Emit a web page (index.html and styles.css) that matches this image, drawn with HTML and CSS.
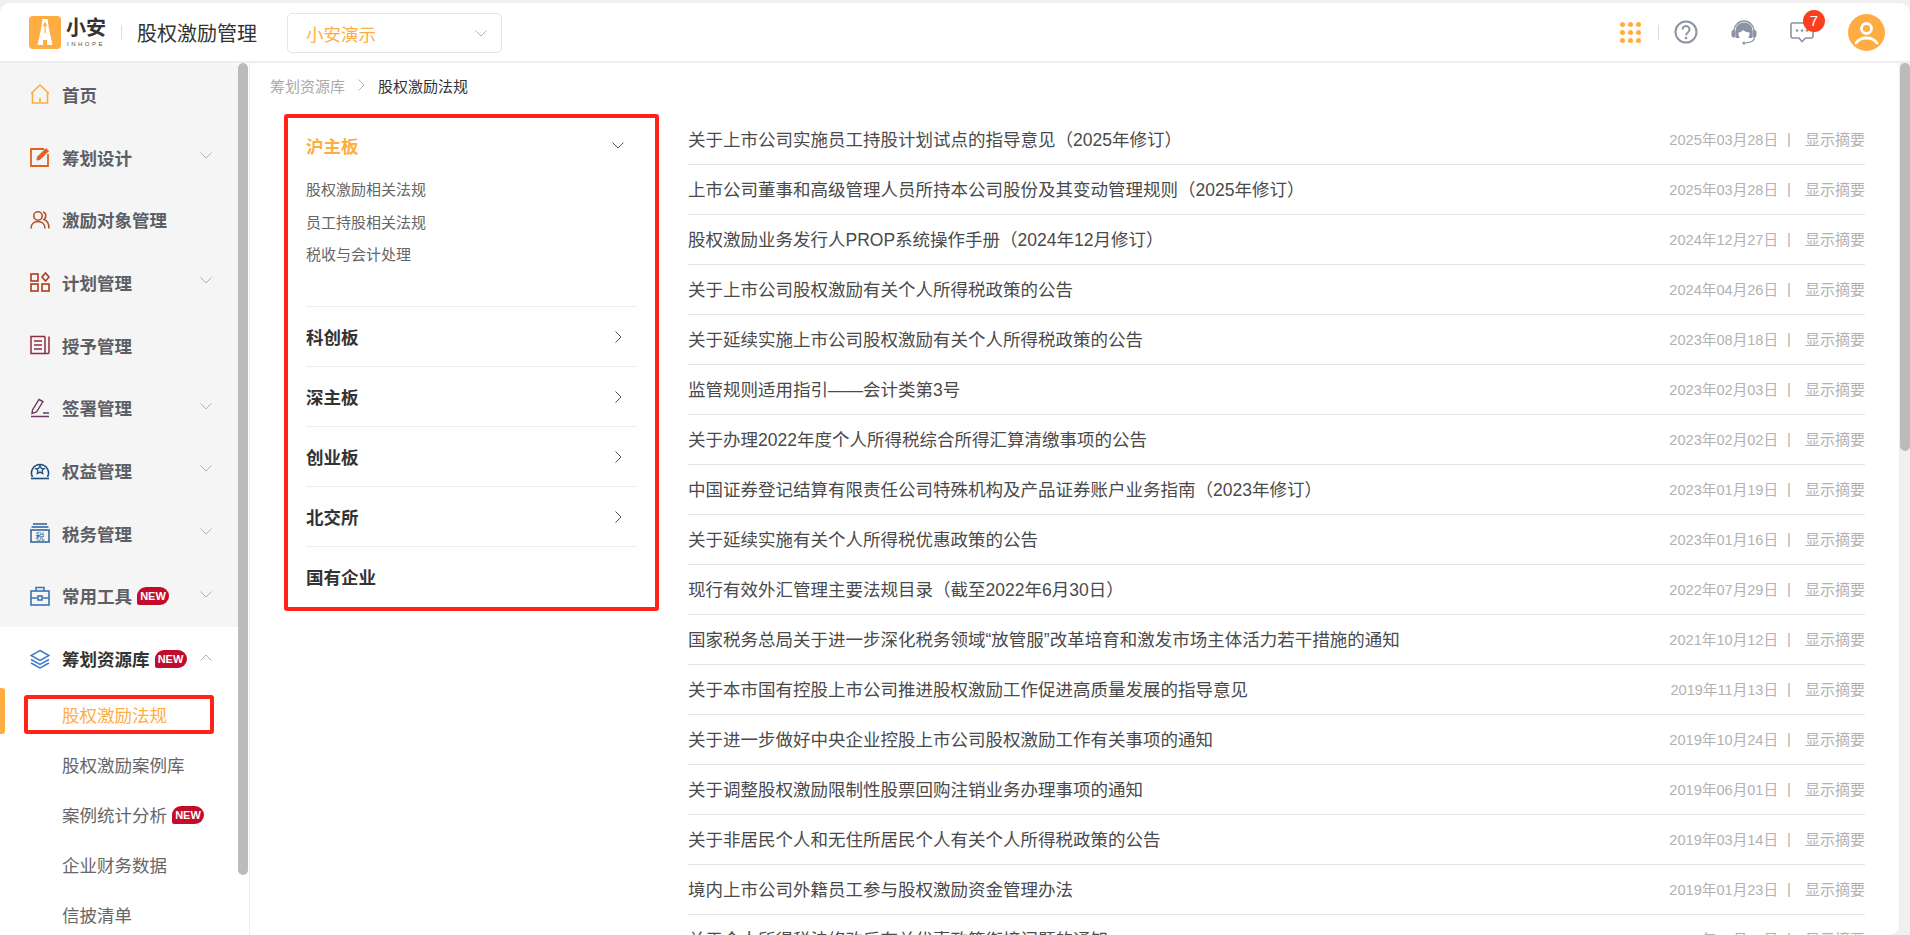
FILE: index.html
```html
<!DOCTYPE html>
<html lang="zh-CN">
<head>
    <meta charset="UTF-8">
    <title>股权激励法规</title>
    <link rel="stylesheet" href="styles.css">
</head>
<body>
    <header class="topbar">
        <div class="logo">
            <svg class="logo-mark" viewBox="0 0 32 33">
                <rect width="32" height="33" rx="4" fill="#ffad42"/>
                <path d="M13.500 3h5l1.500 10 3.500 16H18v-5h-4v5H8.500l3.500-16z" fill="#fff"/>
                <path d="M16 7v10M14.300 10 16 7l1.700 3" stroke="#ffad42" stroke-width="1.200" fill="none"/>
            </svg>
            <div class="logo-text">
                <span class="logo-cn">小安</span>
                <span class="logo-en">INHOPE</span>
            </div>
        </div>
        <span class="logo-line"></span>
        <span class="app-title">股权激励管理</span>
        <div class="company-select">
            <span>小安演示</span>
            <svg class="chev" viewBox="0 0 12 7"><path d="M.5.500 6 6 11.500.500"/></svg>
        </div>
        <div class="tools">
            <div class="dots"><i></i><i></i><i></i><i></i><i></i><i></i><i></i><i></i><i></i></div>
            <span class="tools-line"></span>
            <svg class="tool-icon help" viewBox="0 0 24 24">
                <circle cx="12" cy="12" r="10.500" fill="none" stroke="#8d93a3" stroke-width="2"/>
                <path d="M8.500 9.500a3.500 3.500 0 1 1 5.600 2.800c-1.300 1-2.100 1.600-2.100 3" fill="none" stroke="#8d93a3" stroke-width="2"/>
                <circle cx="12" cy="18" r="1.300" fill="#8d93a3"/>
            </svg>
            <svg class="tool-icon headset" viewBox="0 0 26 26">
                <path d="M3 12a10 10 0 0 1 20 0" fill="none" stroke="#8d93a3" stroke-width="1.300"/>
                <path d="M13 3.500c-5 0-8.500 3.500-8.500 8.500v7h17v-7c0-5-3.500-8.500-8.500-8.500z" fill="#8d93a3"/>
                <path d="M7.500 13.500c2-.2 3.500-1 4.500-2.500 1.500 1.500 4 2.300 6.500 2.500.3 4-2 8-5.500 8s-5.800-4-5.500-8z" fill="#fff"/>
                <rect x=".5" y="11" width="4" height="7.500" rx="2" fill="#8d93a3"/>
                <rect x="21.500" y="11" width="4" height="7.500" rx="2" fill="#8d93a3"/>
                <path d="M23.500 18c0 3.500-3.500 5.500-8.500 5.800" fill="none" stroke="#8d93a3" stroke-width="1.200"/>
                <circle cx="13" cy="24" r="1.600" fill="#8d93a3"/>
            </svg>
            <div class="msg">
                <svg class="tool-icon" viewBox="0 0 24 22">
                    <path d="M1 3.500a1.500 1.500 0 0 1 1.500-1.500h19a1.500 1.500 0 0 1 1.500 1.500v12a1.500 1.500 0 0 1-1.500 1.500h-6l-3.500 3.500L9 17H2.500A1.500 1.500 0 0 1 1 15.500z" fill="none" stroke="#8d93a3" stroke-width="1.600"/>
                    <circle cx="7" cy="9.500" r="1.300" fill="#8d93a3"/>
                    <circle cx="12" cy="9.500" r="1.300" fill="#8d93a3"/>
                    <circle cx="17" cy="9.500" r="1.300" fill="#8d93a3"/>
                </svg>
                <span class="msg-count">7</span>
            </div>
            <svg class="avatar" viewBox="0 0 37 37">
                <circle cx="18.500" cy="18.500" r="18.500" fill="#ffad42"/>
                <circle cx="18.500" cy="14.500" r="5" fill="none" stroke="#fff" stroke-width="2.800"/>
                <path d="M8 29c2.500-3.500 6.500-5 10.500-5s8 1.500 10.500 5" fill="none" stroke="#fff" stroke-width="2.800" stroke-linecap="round"/>
            </svg>
        </div>
    </header>

    <div class="layout">
        <aside class="sidebar">
            <div class="nav-item">
                <svg class="nav-icon" viewBox="0 0 20 20" stroke="#ffad42" stroke-width="1.600" stroke-linejoin="round"><path d="M1 9.500 10 1l9 8.500M2.500 8v11h15V8M10 14v5"/></svg>
                <span>首页</span>
            </div>
            <div class="nav-item">
                <svg class="nav-icon" viewBox="0 0 20 20" stroke="#e2611f"><path d="M14 2H1v17h17V7" stroke-width="1.800"/><path d="M7 13l.5-3L16 1.500 18.500 4 10 12.500z" fill="#e2611f"/></svg>
                <span>筹划设计</span>
                <svg class="chev" viewBox="0 0 12 7"><path d="M.5.500 6 6 11.500.500"/></svg>
            </div>
            <div class="nav-item">
                <svg class="nav-icon" viewBox="0 0 20 20" stroke="#b4502c"><circle cx="8" cy="6" r="4.200" stroke-width="1.600"/><path d="M1 18.500c0-4.500 3-7 7-7s7 2.500 7 7M13 2c3 .5 4 5 1 7.500 3 1 5 4 5 9" stroke-width="1.600"/></svg>
                <span>激励对象管理</span>
            </div>
            <div class="nav-item">
                <svg class="nav-icon" viewBox="0 0 20 20" stroke="#b23a1c" stroke-width="1.600"><rect x="1" y="2" width="7" height="7"/><rect x="1" y="12" width="7" height="7"/><rect x="12" y="12" width="7" height="7"/><path d="M15.500 1l3.500 4-3.500 4L12 5z"/></svg>
                <span>计划管理</span>
                <svg class="chev" viewBox="0 0 12 7"><path d="M.5.500 6 6 11.500.500"/></svg>
            </div>
            <div class="nav-item">
                <svg class="nav-icon" viewBox="0 0 20 20" stroke="#8f2d3f" stroke-width="1.500"><path d="M15 1.500H1v17h17c1 0 1-1 1-1.500V1.500M15 1.500v17M4 6h8M4 10h8M4 14h8"/></svg>
                <span>授予管理</span>
            </div>
            <div class="nav-item">
                <svg class="nav-icon" viewBox="0 0 20 20" stroke="#6a3b5e" stroke-width="1.400"><path d="M2 15.500 2.500 12 9 1.500l4 2L6.500 14zM1 18.500h18M13 15h6"/></svg>
                <span>签署管理</span>
                <svg class="chev" viewBox="0 0 12 7"><path d="M.5.500 6 6 11.500.500"/></svg>
            </div>
            <div class="nav-item">
                <svg class="nav-icon" viewBox="0 0 20 20" stroke="#1f4f7c" stroke-width="1.600"><path d="M2.500 17a8.500 8.500 0 1 1 15 0"/><path d="M1 18.500h18"/><path d="M10 5.500l1.300 2.800 3 .3-2.200 2 .6 3L10 12.100l-2.700 1.500.6-3-2.200-2 3-.3z" stroke-width="1.300"/></svg>
                <span>权益管理</span>
                <svg class="chev" viewBox="0 0 12 7"><path d="M.5.500 6 6 11.500.500"/></svg>
            </div>
            <div class="nav-item">
                <svg class="nav-icon" viewBox="0 0 20 20" stroke="#2c5f95" stroke-width="1.500"><path d="M3 1h14M1.500 4h17"/><rect x="1" y="7" width="18" height="12"/><text x="10" y="16.500" class="tax-mark">税</text></svg>
                <span>税务管理</span>
                <svg class="chev" viewBox="0 0 12 7"><path d="M.5.500 6 6 11.500.500"/></svg>
            </div>
            <div class="nav-item">
                <svg class="nav-icon" viewBox="0 0 20 20" stroke="#3a74b5" stroke-width="1.600"><rect x="1" y="5" width="18" height="14"/><path d="M6 5V1.500h8V5M1 12h6M13 12h6"/><rect x="8" y="10" width="4" height="4"/></svg>
                <span>常用工具</span>
                <em class="new-tag">NEW</em>
                <svg class="chev" viewBox="0 0 12 7"><path d="M.5.500 6 6 11.500.500"/></svg>
            </div>
            <div class="nav-open">
                <div class="nav-item nav-current">
                    <svg class="nav-icon" viewBox="0 0 20 20" stroke="#3f7cc4" stroke-width="1.500"><path d="M10 1.500 19 6.500l-9 5-9-5zM1 10.500l9 5 9-5M1 14l9 5 9-5"/></svg>
                    <span>筹划资源库</span>
                    <em class="new-tag">NEW</em>
                    <svg class="chev" viewBox="0 0 12 7"><path d="M.5 6.500 6 1l5.500 5.500"/></svg>
                </div>
                <a class="sub-item sub-active"><span class="mark-box">股权激励法规</span></a>
                <a class="sub-item">股权激励案例库</a>
                <a class="sub-item">案例统计分析<em class="new-tag">NEW</em></a>
                <a class="sub-item">企业财务数据</a>
                <a class="sub-item">信披清单</a>
            </div>
            <div class="side-thumb"></div>
        </aside>

        <main class="content">
            <div class="crumbs">
                <span>筹划资源库</span>
                <svg class="crumb-arrow" viewBox="0 0 7 12"><path d="M.5.500 6 6 .5 11.500"/></svg>
                <b>股权激励法规</b>
            </div>
            <div class="columns">
                <section class="boards">
                    <div class="board board-open">
                        <div class="board-head">
                            <span>沪主板</span>
                            <svg class="board-arrow down" viewBox="0 0 12 7"><path d="M.5.500 6 6 11.500.500"/></svg>
                        </div>
                        <ul class="board-links">
                            <li>股权激励相关法规</li>
                            <li>员工持股相关法规</li>
                            <li>税收与会计处理</li>
                        </ul>
                    </div>
                    <div class="board">
                        <div class="board-head"><span>科创板</span><svg class="board-arrow" viewBox="0 0 7 12"><path d="M.5.500 6 6 .5 11.500"/></svg></div>
                    </div>
                    <div class="board">
                        <div class="board-head"><span>深主板</span><svg class="board-arrow" viewBox="0 0 7 12"><path d="M.5.500 6 6 .5 11.500"/></svg></div>
                    </div>
                    <div class="board">
                        <div class="board-head"><span>创业板</span><svg class="board-arrow" viewBox="0 0 7 12"><path d="M.5.500 6 6 .5 11.500"/></svg></div>
                    </div>
                    <div class="board">
                        <div class="board-head"><span>北交所</span><svg class="board-arrow" viewBox="0 0 7 12"><path d="M.5.500 6 6 .5 11.500"/></svg></div>
                    </div>
                    <div class="board">
                        <div class="board-head"><span>国有企业</span></div>
                    </div>
                </section>

                <section class="laws">
                    <div class="law"><span class="law-name">关于上市公司实施员工持股计划试点的指导意见（2025年修订）</span><span class="law-date">2025年03月28日</span><span class="law-sep">|</span><span class="law-more">显示摘要</span></div>
                    <div class="law"><span class="law-name">上市公司董事和高级管理人员所持本公司股份及其变动管理规则（2025年修订）</span><span class="law-date">2025年03月28日</span><span class="law-sep">|</span><span class="law-more">显示摘要</span></div>
                    <div class="law"><span class="law-name">股权激励业务发行人PROP系统操作手册（2024年12月修订）</span><span class="law-date">2024年12月27日</span><span class="law-sep">|</span><span class="law-more">显示摘要</span></div>
                    <div class="law"><span class="law-name">关于上市公司股权激励有关个人所得税政策的公告</span><span class="law-date">2024年04月26日</span><span class="law-sep">|</span><span class="law-more">显示摘要</span></div>
                    <div class="law"><span class="law-name">关于延续实施上市公司股权激励有关个人所得税政策的公告</span><span class="law-date">2023年08月18日</span><span class="law-sep">|</span><span class="law-more">显示摘要</span></div>
                    <div class="law"><span class="law-name">监管规则适用指引——会计类第3号</span><span class="law-date">2023年02月03日</span><span class="law-sep">|</span><span class="law-more">显示摘要</span></div>
                    <div class="law"><span class="law-name">关于办理2022年度个人所得税综合所得汇算清缴事项的公告</span><span class="law-date">2023年02月02日</span><span class="law-sep">|</span><span class="law-more">显示摘要</span></div>
                    <div class="law"><span class="law-name">中国证券登记结算有限责任公司特殊机构及产品证券账户业务指南（2023年修订）</span><span class="law-date">2023年01月19日</span><span class="law-sep">|</span><span class="law-more">显示摘要</span></div>
                    <div class="law"><span class="law-name">关于延续实施有关个人所得税优惠政策的公告</span><span class="law-date">2023年01月16日</span><span class="law-sep">|</span><span class="law-more">显示摘要</span></div>
                    <div class="law"><span class="law-name">现行有效外汇管理主要法规目录（截至2022年6月30日）</span><span class="law-date">2022年07月29日</span><span class="law-sep">|</span><span class="law-more">显示摘要</span></div>
                    <div class="law"><span class="law-name">国家税务总局关于进一步深化税务领域“放管服”改革培育和激发市场主体活力若干措施的通知</span><span class="law-date">2021年10月12日</span><span class="law-sep">|</span><span class="law-more">显示摘要</span></div>
                    <div class="law"><span class="law-name">关于本市国有控股上市公司推进股权激励工作促进高质量发展的指导意见</span><span class="law-date">2019年11月13日</span><span class="law-sep">|</span><span class="law-more">显示摘要</span></div>
                    <div class="law"><span class="law-name">关于进一步做好中央企业控股上市公司股权激励工作有关事项的通知</span><span class="law-date">2019年10月24日</span><span class="law-sep">|</span><span class="law-more">显示摘要</span></div>
                    <div class="law"><span class="law-name">关于调整股权激励限制性股票回购注销业务办理事项的通知</span><span class="law-date">2019年06月01日</span><span class="law-sep">|</span><span class="law-more">显示摘要</span></div>
                    <div class="law"><span class="law-name">关于非居民个人和无住所居民个人有关个人所得税政策的公告</span><span class="law-date">2019年03月14日</span><span class="law-sep">|</span><span class="law-more">显示摘要</span></div>
                    <div class="law"><span class="law-name">境内上市公司外籍员工参与股权激励资金管理办法</span><span class="law-date">2019年01月23日</span><span class="law-sep">|</span><span class="law-more">显示摘要</span></div>
                    <div class="law"><span class="law-name">关于个人所得税法修改后有关优惠政策衔接问题的通知</span><span class="law-date">2018年12月27日</span><span class="law-sep">|</span><span class="law-more">显示摘要</span></div>
                </section>
            </div>
        </main>
        <div class="main-thumb"></div>
    </div>
</body>
</html>
```
FILE: styles.css
```css
* {
    box-sizing: border-box;
}

html, body {
    height: 100%;
}

body {
    margin: 0;
    padding-top: 3px;
    background-color: #f0f0f0;
    font-family: "Liberation Sans", "Noto Sans CJK SC", sans-serif;
    color: #333;
    overflow: hidden;
}

ul {
    list-style: none;
    margin: 0;
    padding: 0;
}

em {
    font-style: normal;
}

svg {
    display: block;
    flex: none;
}

.chev {
    width: 12px;
    height: 7px;
    fill: none;
    stroke: #aeb1b8;
    stroke-width: 1;
}

/* top bar */
.topbar {
    display: flex;
    align-items: center;
    height: 60px;
    padding-left: 29px;
    background-color: #fff;
    border-bottom: 2px solid #eee;
    border-radius: 10px 10px 0 0;
}

.logo {
    display: flex;
    align-items: center;
    gap: 5px;
}

.logo-mark {
    width: 32px;
    height: 33px;
}

.logo-text {
    display: flex;
    flex-direction: column;
    align-items: center;
    width: 40px;
}

.logo-cn {
    font-size: 20px;
    line-height: 24px;
    font-weight: 700;
    color: #333;
}

.logo-en {
    font-size: 6px;
    line-height: 8px;
    letter-spacing: 2.500px;
    color: #555;
}

.logo-line {
    width: 1px;
    height: 15px;
    margin: 0 15px;
    background-color: #ddd;
}

.app-title {
    width: 150px;
    font-size: 20px;
    color: #333;
}

.company-select {
    display: flex;
    align-items: center;
    justify-content: space-between;
    width: 215px;
    height: 40px;
    margin-top: 2px;
    padding: 0 14px 0 18px;
    border: 1px solid #e5e5e5;
    border-radius: 5px;
    font-size: 17.500px;
    color: #ffad42;
}

.tools {
    display: flex;
    align-items: center;
    margin-left: auto;
    padding-right: 25px;
}

.dots {
    display: grid;
    grid-template-columns: repeat(3, 5px);
    gap: 3px;
}

.dots i {
    width: 5px;
    height: 5px;
    border-radius: 50%;
    background-color: #ffad42;
}

.tools-line {
    width: 1px;
    height: 15px;
    margin: 0 15px 0 17px;
    background-color: #ddd;
}

.tool-icon {
    width: 24px;
    height: 22px;
}

.help {
    height: 24px;
    margin-right: 33px;
}

.headset {
    width: 26px;
    height: 26px;
    margin-right: 33px;
}

.msg {
    position: relative;
    margin-right: 34px;
}

.msg-count {
    position: absolute;
    top: -11px;
    left: 13px;
    width: 22px;
    height: 22px;
    border-radius: 50%;
    background-color: #fb3e1c;
    color: #fff;
    font-size: 15px;
    line-height: 21px;
    text-align: center;
}

.avatar {
    width: 37px;
    height: 37px;
}

/* page body */
.layout {
    position: relative;
    display: flex;
    height: calc(100% - 60px);
    overflow: hidden;
}

.sidebar {
    position: relative;
    flex: none;
    width: 250px;
    padding-right: 11px;
    background-color: #fff;
    border-right: 1px solid #eee;
    overflow: hidden;
}

.nav-item {
    display: flex;
    align-items: center;
    height: 62.700px;
    padding-left: 30px;
    background-color: #f5f5f5;
    font-size: 17.500px;
    font-weight: 700;
    color: #5c5f66;
}

.nav-item > .chev {
    margin-left: auto;
    margin-right: 26px;
    margin-bottom: 3px;
}

.nav-icon {
    width: 20px;
    height: 20px;
    margin-right: 12px;
    fill: none;
}

.tax-mark {
    font-size: 9px;
    font-weight: 400;
    text-anchor: middle;
    fill: #2c5f95;
    stroke: none;
}

.new-tag {
    display: inline-block;
    width: 32px;
    height: 18px;
    margin-left: 5px;
    border-radius: 9px 9px 9px 2px;
    background-color: #c20c2c;
    color: #fff;
    font-family: "Liberation Sans", sans-serif;
    font-size: 11px;
    font-weight: 700;
    line-height: 18px;
    text-align: center;
}

.nav-open .nav-item {
    background-color: #fff;
}

.nav-current {
    color: #333;
}

.sub-item {
    position: relative;
    display: flex;
    align-items: center;
    height: 50px;
    padding-left: 62px;
    font-size: 17.500px;
    color: #666;
}

.sub-active {
    color: #ffad42;
}

.sub-active::before {
    content: "";
    position: absolute;
    left: 0;
    top: -2px;
    width: 5px;
    height: 46px;
    border-radius: 0 3px 3px 0;
    background-color: #ffad42;
}

.mark-box {
    display: flex;
    align-items: center;
    width: 190px;
    height: 39px;
    margin-left: -38px;
    padding-left: 34px;
    border: 4px solid #ff2417;
    border-radius: 3px;
}

.side-thumb {
    position: absolute;
    top: 0;
    right: 1px;
    width: 10px;
    height: 812px;
    border-radius: 5px;
    background-color: #bbb;
}

/* main area */
.content {
    flex: 1;
    min-width: 0;
    margin-right: 10px;
    padding-left: 20px;
    background-color: #fff;
    border-right: 1px solid #eee;
    border-radius: 0 0 10px 0;
}

.main-thumb {
    position: absolute;
    top: 0;
    right: 0;
    width: 10px;
    height: 388px;
    border-radius: 5px;
    background-color: #bbb;
}

.crumbs {
    display: flex;
    align-items: center;
    height: 44px;
    font-size: 15px;
    color: #aaa;
    margin-bottom: 7px;
}

.crumbs b {
    font-weight: 400;
    color: #333;
}

.crumb-arrow {
    width: 7px;
    height: 12px;
    margin: 0 13px;
    fill: none;
    stroke: #b5b5b5;
}

.columns {
    display: flex;
    align-items: flex-start;
    padding-left: 14px;
}

.boards {
    flex: none;
    width: 375px;
    padding: 0 18px 1px;
    border: 4px solid #ff2417;
    border-radius: 3px;
}

.board {
    border-top: 1px solid #ecedf3;
}

.board:first-child {
    height: 188px;
    border-top: 0;
}

.board-head {
    display: flex;
    align-items: center;
    justify-content: space-between;
    height: 59px;
    padding-right: 15px;
    font-size: 17.500px;
    font-weight: 700;
    color: #333;
}

.board-open .board-head {
    height: 54px;
    color: #ffad42;
}

.board-arrow {
    width: 7px;
    height: 12px;
    fill: none;
    stroke: #50545e;
}

.board-arrow.down {
    width: 12px;
    height: 7px;
    margin-right: -2px;
}

.board-links {
    padding-top: 2px;
    font-size: 15px;
    line-height: 32.700px;
    color: #666;
}

.laws {
    flex: none;
    width: 1177px;
    margin: 1px 0 0 29px;
}

.law {
    display: flex;
    align-items: center;
    height: 50px;
    padding-bottom: 2px;
    border-bottom: 1px solid #e4e4e4;
    font-size: 15px;
    color: #b2b2b2;
}

.law-name {
    flex: 1;
    font-size: 17.500px;
    color: #4a4a4a;
}

.law-date {
    font-size: 14.600px;
}

.law-sep {
    margin: 0 14px 0 9px;
}
```
